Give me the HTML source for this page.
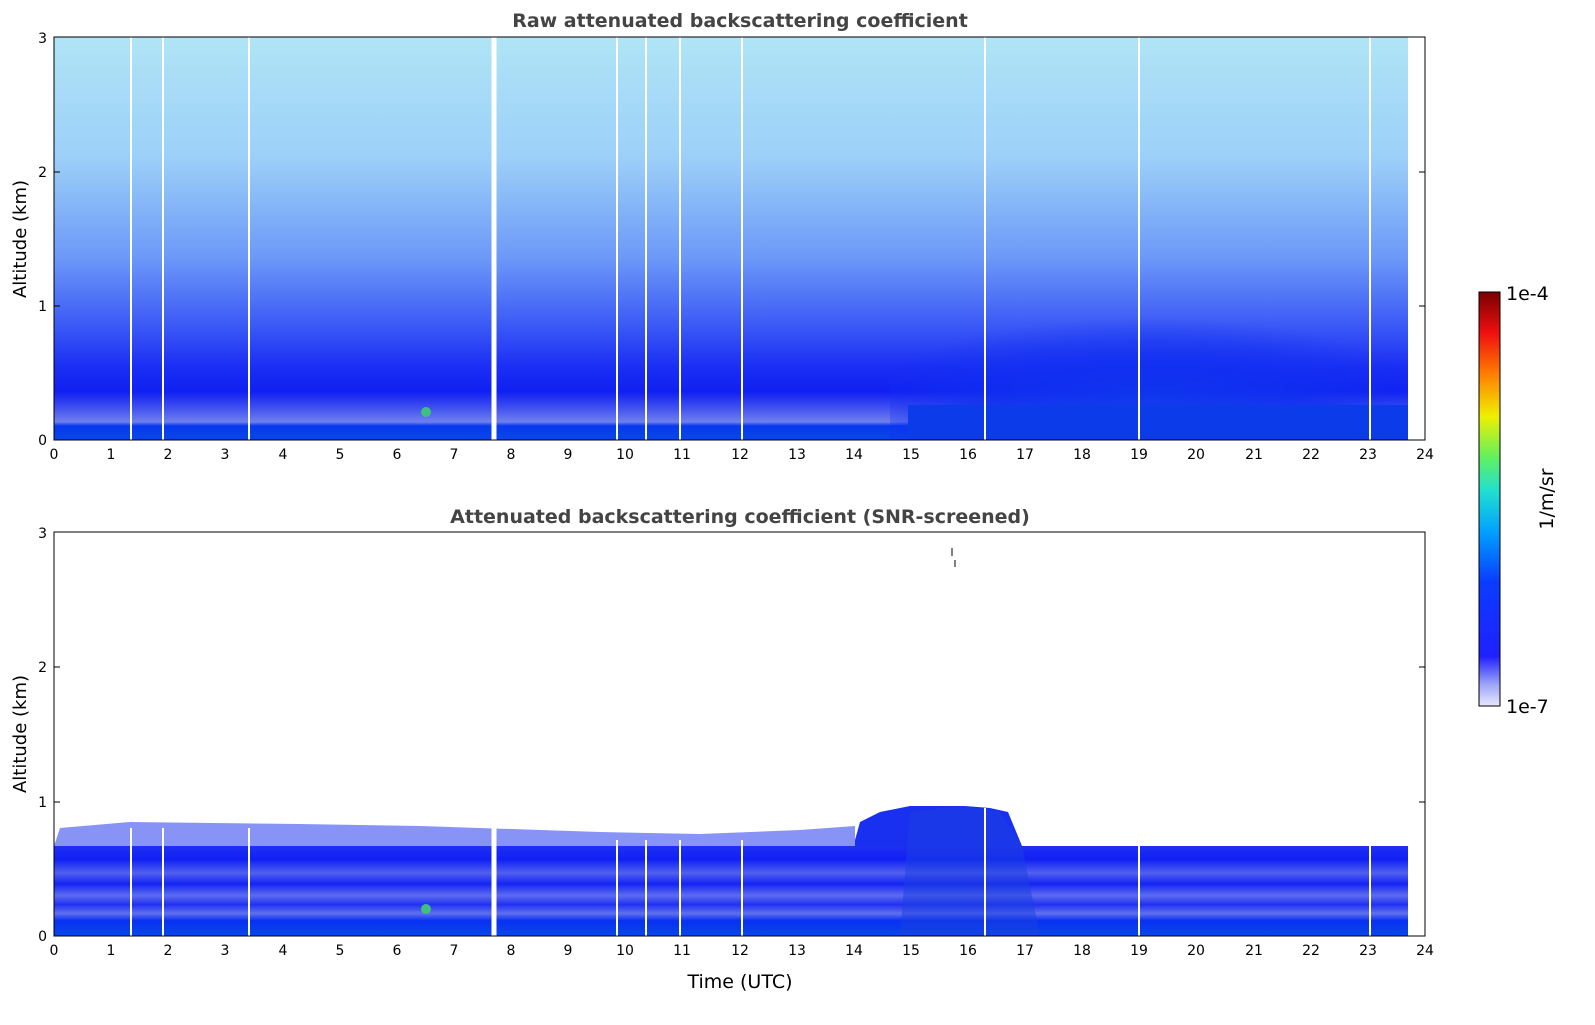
<!DOCTYPE html>
<html><head><meta charset="utf-8"><style>
html,body{margin:0;padding:0;background:#fff;}
svg text{font-family:"DejaVu Sans","Liberation Sans",sans-serif;}
</style></head><body>
<svg width="1595" height="1020" viewBox="0 0 1595 1020" xmlns="http://www.w3.org/2000/svg">
<defs>
<linearGradient id="top" x1="0" y1="0" x2="0" y2="1">
<stop offset="0" stop-color="#b0e4f6"/>
<stop offset="0.3" stop-color="#9cd0f8"/>
<stop offset="0.55" stop-color="#6c98f8"/>
<stop offset="0.72" stop-color="#3a58f6"/>
<stop offset="0.82" stop-color="#1a2ef4"/>
<stop offset="0.88" stop-color="#1020f2"/>
<stop offset="0.92" stop-color="#4050f0"/>
<stop offset="0.955" stop-color="#7080ee"/>
<stop offset="0.965" stop-color="#0838ee"/>
<stop offset="1" stop-color="#0848ea"/>
</linearGradient>
<radialGradient id="blob" cx="0.5" cy="0.95" r="0.6">
<stop offset="0" stop-color="#0c40ea" stop-opacity="1"/>
<stop offset="0.55" stop-color="#1030f0" stop-opacity="0.8"/>
<stop offset="1" stop-color="#1030f0" stop-opacity="0"/>
</radialGradient>
<linearGradient id="band" x1="0" y1="0" x2="0" y2="1">
<stop offset="0" stop-color="#2030f2"/>
<stop offset="0.15" stop-color="#1020f4"/>
<stop offset="0.3" stop-color="#5060f0"/>
<stop offset="0.42" stop-color="#1424f4"/>
<stop offset="0.55" stop-color="#5c6cf0"/>
<stop offset="0.65" stop-color="#2030f2"/>
<stop offset="0.75" stop-color="#6070f0"/>
<stop offset="0.83" stop-color="#0830f2"/>
<stop offset="1" stop-color="#0848ea"/>
</linearGradient>
<linearGradient id="cb" x1="0" y1="1" x2="0" y2="0">
<stop offset="0" stop-color="#e8e8fc"/>
<stop offset="0.05" stop-color="#a0a8f8"/>
<stop offset="0.12" stop-color="#2020ff"/>
<stop offset="0.3" stop-color="#0a3cff"/>
<stop offset="0.42" stop-color="#00a0ff"/>
<stop offset="0.52" stop-color="#20e0d0"/>
<stop offset="0.6" stop-color="#60f060"/>
<stop offset="0.7" stop-color="#f0f000"/>
<stop offset="0.8" stop-color="#ff8000"/>
<stop offset="0.9" stop-color="#f01010"/>
<stop offset="1" stop-color="#7a0000"/>
</linearGradient>
</defs>

<text x="740" y="27" font-size="19" font-weight="bold" fill="#444" text-anchor="middle">Raw attenuated backscattering coefficient</text>
<text x="740" y="523" font-size="19" font-weight="bold" fill="#444" text-anchor="middle">Attenuated backscattering coefficient (SNR-screened)</text>

<rect x="54" y="37" width="1354" height="403" fill="url(#top)"/>
<rect x="890" y="250" width="518" height="190" fill="url(#blob)"/>
<rect x="908" y="405" width="500" height="35" fill="#0c3cea"/>
<circle cx="426" cy="412" r="5" fill="#40c080"/>
<g stroke="#fff" stroke-width="2">
<line x1="131" y1="37" x2="131" y2="440"/><line x1="163" y1="37" x2="163" y2="440"/>
<line x1="249" y1="37" x2="249" y2="440"/><line x1="494" y1="37" x2="494" y2="440" stroke-width="5"/>
<line x1="617" y1="37" x2="617" y2="440"/><line x1="646" y1="37" x2="646" y2="440"/>
<line x1="680" y1="37" x2="680" y2="440"/><line x1="742" y1="37" x2="742" y2="440"/>
<line x1="985" y1="37" x2="985" y2="440"/><line x1="1139" y1="37" x2="1139" y2="440"/>
<line x1="1370" y1="37" x2="1370" y2="440"/>
</g>
<rect x="54" y="37" width="1371" height="403" fill="none" stroke="#000" stroke-width="1"/>

<path d="M54 846 L1408 846 L1408 936 L54 936 Z" fill="url(#band)"/>
<path d="M54 846 L60 828 L130 822 L300 824 L420 826 L600 832 L700 834 L800 830 L855 826 L855 846 Z" fill="#6070f2" opacity="0.75"/>
<path d="M855 840 L860 822 L880 812 L910 806 L965 806 L990 808 L1008 812 L1022 846 L855 846 Z" fill="#1a30f0"/>
<path d="M910 812 L960 806 L1000 812 L1022 846 L1040 936 L900 936 Z" fill="#1a40e0" opacity="0.5"/>
<circle cx="426" cy="909" r="5" fill="#40c080"/>
<g stroke="#fff" stroke-width="2">
<line x1="131" y1="828" x2="131" y2="936"/><line x1="163" y1="828" x2="163" y2="936"/>
<line x1="249" y1="828" x2="249" y2="936"/><line x1="494" y1="828" x2="494" y2="936" stroke-width="5"/>
<line x1="617" y1="840" x2="617" y2="936"/><line x1="646" y1="840" x2="646" y2="936"/>
<line x1="680" y1="840" x2="680" y2="936"/><line x1="742" y1="840" x2="742" y2="936"/>
<line x1="985" y1="808" x2="985" y2="936"/><line x1="1139" y1="840" x2="1139" y2="936"/>
<line x1="1370" y1="840" x2="1370" y2="936"/>
</g>
<line x1="952" y1="548" x2="952" y2="556" stroke="#000"/><line x1="955" y1="560" x2="955" y2="567" stroke="#000"/>
<rect x="54" y="532" width="1371" height="404" fill="none" stroke="#000" stroke-width="1"/>

<g font-size="14" fill="#000" text-anchor="middle">
<text x="54" y="459">0</text><text x="111" y="459">1</text><text x="168" y="459">2</text><text x="225" y="459">3</text><text x="283" y="459">4</text><text x="340" y="459">5</text><text x="397" y="459">6</text><text x="454" y="459">7</text><text x="511" y="459">8</text><text x="568" y="459">9</text><text x="625" y="459">10</text><text x="682" y="459">11</text><text x="740" y="459">12</text><text x="797" y="459">13</text><text x="854" y="459">14</text><text x="911" y="459">15</text><text x="968" y="459">16</text><text x="1025" y="459">17</text><text x="1082" y="459">18</text><text x="1139" y="459">19</text><text x="1196" y="459">20</text><text x="1254" y="459">21</text><text x="1311" y="459">22</text><text x="1368" y="459">23</text><text x="1425" y="459">24</text>
</g>
<g font-size="14" fill="#000" text-anchor="middle">
<text x="54" y="955">0</text><text x="111" y="955">1</text><text x="168" y="955">2</text><text x="225" y="955">3</text><text x="283" y="955">4</text><text x="340" y="955">5</text><text x="397" y="955">6</text><text x="454" y="955">7</text><text x="511" y="955">8</text><text x="568" y="955">9</text><text x="625" y="955">10</text><text x="682" y="955">11</text><text x="740" y="955">12</text><text x="797" y="955">13</text><text x="854" y="955">14</text><text x="911" y="955">15</text><text x="968" y="955">16</text><text x="1025" y="955">17</text><text x="1082" y="955">18</text><text x="1139" y="955">19</text><text x="1196" y="955">20</text><text x="1254" y="955">21</text><text x="1311" y="955">22</text><text x="1368" y="955">23</text><text x="1425" y="955">24</text>
</g>
<g font-size="14" fill="#000" text-anchor="end">
<text x="47" y="445">0</text><text x="47" y="311">1</text><text x="47" y="177">2</text><text x="47" y="43">3</text>
<text x="47" y="941">0</text><text x="47" y="807">1</text><text x="47" y="672">2</text><text x="47" y="538">3</text>
</g>
<g stroke="#000" stroke-width="1">
<line x1="1419" y1="306" x2="1425" y2="306"/><line x1="1419" y1="172" x2="1425" y2="172"/>
<line x1="1419" y1="802" x2="1425" y2="802"/><line x1="1419" y1="667" x2="1425" y2="667"/>
<line x1="54" y1="306" x2="60" y2="306"/><line x1="54" y1="172" x2="60" y2="172"/>
<line x1="54" y1="802" x2="60" y2="802"/><line x1="54" y1="667" x2="60" y2="667"/>
</g>
<text transform="translate(26,239) rotate(-90)" font-size="18" text-anchor="middle" fill="#000">Altitude (km)</text>
<text transform="translate(26,734) rotate(-90)" font-size="18" text-anchor="middle" fill="#000">Altitude (km)</text>
<text x="740" y="988" font-size="19" text-anchor="middle" fill="#000">Time (UTC)</text>

<rect x="1479" y="292" width="21" height="414" fill="url(#cb)" stroke="#000" stroke-width="1"/>
<text x="1506" y="300" font-size="19" fill="#000">1e-4</text>
<text x="1506" y="713" font-size="19" fill="#000">1e-7</text>
<text transform="translate(1553,499) rotate(-90)" font-size="19" text-anchor="middle" fill="#000">1/m/sr</text>
</svg>
</body></html>
